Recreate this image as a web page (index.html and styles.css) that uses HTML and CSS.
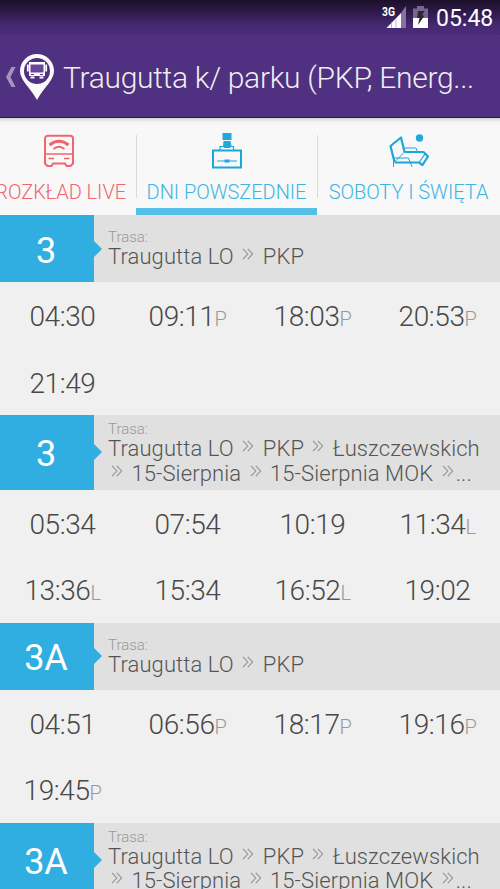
FILE: index.html
```html
<!DOCTYPE html>
<html lang="pl">
<head>
<meta charset="UTF-8">
<meta name="viewport" content="width=device-width, initial-scale=1.0">
<title>Rozkład jazdy</title>
<link rel="stylesheet" href="styles.css">
</head>
<body>
<svg class="defs" width="0" height="0">
    <symbol id="chevrons" viewBox="0 0 12 12">
        <path d="M1 .8 5.8 6 1 11.2M5.8 .8 10.6 6 5.8 11.2" fill="none" stroke="#929292" stroke-width="1.1"/>
    </symbol>
</svg>
<header>
    <div class="status">
        <svg class="signal" width="25" height="24" viewBox="0 0 25 24">
            <text x="0" y="11" class="net" textLength="13" lengthAdjust="spacingAndGlyphs">3G</text>
            <path d="M4.500 23 19 8V23z" fill="#fff"/>
            <path d="M19 8 24 1V23H19z" fill="#86719f"/>
            <path d="M9.500 17v6M14 13v10" stroke="#a99abf" stroke-width=".7"/>
        </svg>
        <svg class="battery" width="15" height="22" viewBox="0 0 15 22">
            <path d="M0 2.5h4V0h7v2.5h4V12H0z" fill="#796391"/>
            <path d="M0 12h15v10H0z" fill="#fff"/>
            <path d="M5 5h6.5L9 9.5h2.5L5 19l1.5-7H4z" fill="#2e2733"/>
        </svg>
        <span class="clock">05:48</span>
    </div>
    <div class="bar">
        <svg class="back" width="10" height="20" viewBox="0 0 10 20"><path d="M5.5 0H9.500L4.500 10 9.500 20H5.500L0 10z" fill="#a494bd"/></svg>
        <svg class="pin" width="34" height="46" viewBox="0 0 34 46">
            <path d="M17 0A17 17 0 0 0 0 17C0 26 9 32 17 46 25 32 34 26 34 17A17 17 0 0 0 17 0z" fill="#fafafa"/>
            <circle cx="17" cy="17" r="13" fill="#503080"/>
            <path d="M9 8h16V22h-16z" fill="#fff"/>
            <path d="M10.500 10.500h13v8h-13z" fill="#68469a"/>
            <path d="M7.800 10.500v7M26.200 10.500v7" stroke="#fff" stroke-width="1.8"/>
            <path d="M11 20.500h3M20 20.500h3" stroke="#503080" stroke-width="1"/>
            <path d="M10.500 23.500h4M19.500 23.500h4" stroke="#fff" stroke-width="2"/>
        </svg>
        <h1>Traugutta k/ parku (PKP, Energ...</h1>
    </div>
</header>
<nav>
    <div class="tab live">
        <svg width="30" height="33" viewBox="0 0 30 33" fill="none" stroke="#f06570" stroke-width="2">
            <path d="M4 1.2h22a3 3 0 0 1 3 3V29l-2.500 2.500h-4L21 29H9l-1.500 2.500h-4L1 29V4.200a3 3 0 0 1 3-3z"/>
            <path d="M1 19.500h28M4.500 24H10M20 24h5.500" stroke-width="1.300"/>
            <path d="M5.500 10.500Q15 3 24.500 10.500" stroke-width="3"/>
            <path d="M9.500 14.500Q15 10 20.500 14.500" stroke-width="2"/>
        </svg>
        <span>ROZKŁAD LIVE</span>
    </div>
    <div class="tab active">
        <svg width="30" height="36" viewBox="0 0 30 36" fill="none" stroke="#19a8dc">
            <path d="M10.500 0h9v7h-9zM11.500 8h7l1 5-1.500 2h-6l-1-2z" fill="#22a9dc" stroke="none"/>
            <path d="M8 17v-3.500h3M19 13.500h2.500V17" stroke-width="1.200"/>
            <path d="M1 17.500h28v17H1z" stroke-width="2"/>
            <path d="M5 28h20" stroke-width="1"/>
            <path d="M12.500 26.500h5v3h-5z" fill="#22a9dc" stroke="none"/>
        </svg>
        <span>DNI POWSZEDNIE</span>
    </div>
    <div class="tab">
        <svg width="40" height="34" viewBox="0 0 40 34" fill="none" stroke="#19a8dc" stroke-linejoin="round">
            <path d="M5.500 28 1.500 12 12 3.500 15.500 18" stroke-width="2.200"/>
            <path d="M15.500 18 5.500 28" stroke-width="1"/>
            <path d="M15.500 18h19L39 22.500 33.500 31 30 28.500H5.500" stroke-width="2.200"/>
            <path d="M36 20 30 28.500" stroke-width="1.200"/>
            <path d="M15 14h12l1.500 4M5 24h14.500l3.500 9M4.500 25v8" stroke-width="1"/>
            <circle cx="30.500" cy="4" r="3.700" fill="#22a9dc" stroke="none"/>
        </svg>
        <span>SOBOTY I ŚWIĘTA</span>
    </div>
</nav>
<main>
    <section>
        <div class="line">
            <div class="number">3</div>
            <div class="route">
                <small>Trasa:</small>
                <p>Traugutta LO <svg><use href="#chevrons"/></svg> PKP</p>
            </div>
        </div>
        <div class="times">
            <div>04:30</div><div>09:11<i>P</i></div><div>18:03<i>P</i></div><div>20:53<i>P</i></div>
            <div>21:49</div>
        </div>
    </section>
    <section>
        <div class="line long">
            <div class="number">3</div>
            <div class="route">
                <small>Trasa:</small>
                <p>Traugutta LO <svg><use href="#chevrons"/></svg> PKP <svg><use href="#chevrons"/></svg> Łuszczewskich</p>
                <p><svg><use href="#chevrons"/></svg> 15-Sierpnia <svg><use href="#chevrons"/></svg> 15-Sierpnia MOK <svg class="last"><use href="#chevrons"/></svg>...</p>
            </div>
        </div>
        <div class="times">
            <div>05:34</div><div>07:54</div><div>10:19</div><div>11:34<i>L</i></div>
            <div>13:36<i>L</i></div><div>15:34</div><div>16:52<i>L</i></div><div>19:02</div>
        </div>
    </section>
    <section>
        <div class="line">
            <div class="number">3A</div>
            <div class="route">
                <small>Trasa:</small>
                <p>Traugutta LO <svg><use href="#chevrons"/></svg> PKP</p>
            </div>
        </div>
        <div class="times">
            <div>04:51</div><div>06:56<i>P</i></div><div>18:17<i>P</i></div><div>19:16<i>P</i></div>
            <div>19:45<i>P</i></div>
        </div>
    </section>
    <section>
        <div class="line long">
            <div class="number">3A</div>
            <div class="route">
                <small>Trasa:</small>
                <p>Traugutta LO <svg><use href="#chevrons"/></svg> PKP <svg><use href="#chevrons"/></svg> Łuszczewskich</p>
                <p><svg><use href="#chevrons"/></svg> 15-Sierpnia <svg><use href="#chevrons"/></svg> 15-Sierpnia MOK <svg class="last"><use href="#chevrons"/></svg>...</p>
            </div>
        </div>
    </section>
</main>
</body>
</html>
```
FILE: styles.css
```css
* {
    box-sizing: border-box;
}
body {
    margin: 0;
    width: 500px;
    height: 889px;
    overflow: hidden;
    font-family: Roboto, sans-serif;
    font-weight: 300;
    background-color: #f0f0f0;
    display: flex;
    flex-direction: column;
}
.defs {
    position: absolute;
}
header {
    flex: none;
    height: 118px;
    background-color: #503080;
    border-bottom: 1px solid #32086b;
}
.status {
    height: 35px;
    display: flex;
    align-items: flex-start;
    justify-content: flex-end;
    padding: 5px 8px 0 0;
    background: linear-gradient(#1b1029, #321b50 40%, #472a75 75%, #492b78);
}
.net {
    font-size: 12px;
    font-weight: 700;
    fill: #fff;
}
.battery {
    margin: 1px 8px 0 6px;
}
.clock {
    font-size: 23px;
    font-weight: 400;
    line-height: 27px;
    color: #fff;
    width: 56px;
    white-space: nowrap;
}
.bar {
    display: flex;
    align-items: center;
    height: 83px;
    padding-left: 6px;
}
.pin {
    margin: 0 9px 0 4px;
}
h1 {
    margin: 0;
    padding-top: 1px;
    font-size: 30px;
    font-weight: 300;
    letter-spacing: -0.3px;
    color: #eee;
    white-space: nowrap;
}
nav {
    flex: none;
    height: 97.3px;
    display: flex;
    background: linear-gradient(#d4d4d4, #f3f3f3 4px, #f8f8f8 8px);
}
.tab {
    width: 183px;
    flex: none;
    display: flex;
    flex-direction: column;
    align-items: center;
    position: relative;
    color: #3db5e3;
}
.tab svg {
    height: 36px;
    margin-top: 15px;
}
.tab span {
    font-size: 20px;
    line-height: 24px;
    margin-top: 11px;
    letter-spacing: -0.05px;
    white-space: nowrap;
}
.live {
    width: 136px;
    color: #f06570;
    align-items: flex-end;
    padding-right: 10px;
}
.live svg {
    margin-right: 52px;
}
.active {
    width: 181px;
    border-bottom: 7px solid #55bfe8;
}
/* thin separators on both sides of the active tab */
.active::before, .active::after {
    content: "";
    position: absolute;
    left: 0;
    top: 17px;
    width: 1px;
    height: 63px;
    background-color: #dadada;
}
.active::after {
    left: 181px;
}
.line {
    display: flex;
    height: 66.7px;
    background-color: #e0e0e0;
}
.line.long {
    height: 74.3px;
}
.number {
    width: 94px;
    background-color: #31aee1;
    color: #fff;
    font-size: 36px;
    font-weight: 400;
    display: flex;
    align-items: center;
    justify-content: center;
    position: relative;
    padding: 4px 2px 0 0;
}
.number::after {
    content: "";
    position: absolute;
    left: 94px;
    top: calc(50% - 8px);
    border: 8px solid transparent;
    border-left-color: #31aee1;
    border-right: 0;
}
.route {
    padding: 14px 0 0 14px;
    color: #555;
    white-space: nowrap;
}
.long .route {
    padding-top: 6px;
}
.route small {
    display: block;
    font-size: 15px;
    line-height: 16px;
    color: #999;
}
.route p {
    margin: 0;
    font-size: 22px;
    line-height: 24.5px;
    letter-spacing: 0.1px;
}
.route svg {
    width: 12px;
    height: 12px;
    margin: 0 3px;
    vertical-align: 4px;
}
.route .last {
    margin-right: 2px;
}
.times {
    display: grid;
    grid-template-columns: repeat(4, 125px);
    grid-auto-rows: 66.65px;
    font-size: 28px;
    letter-spacing: -0.4px;
    color: #484848;
}
.times div {
    display: flex;
    justify-content: center;
    align-items: baseline;
    line-height: 70px;
}
.times i {
    font-style: normal;
    font-size: 20px;
    color: #999;
}
```
